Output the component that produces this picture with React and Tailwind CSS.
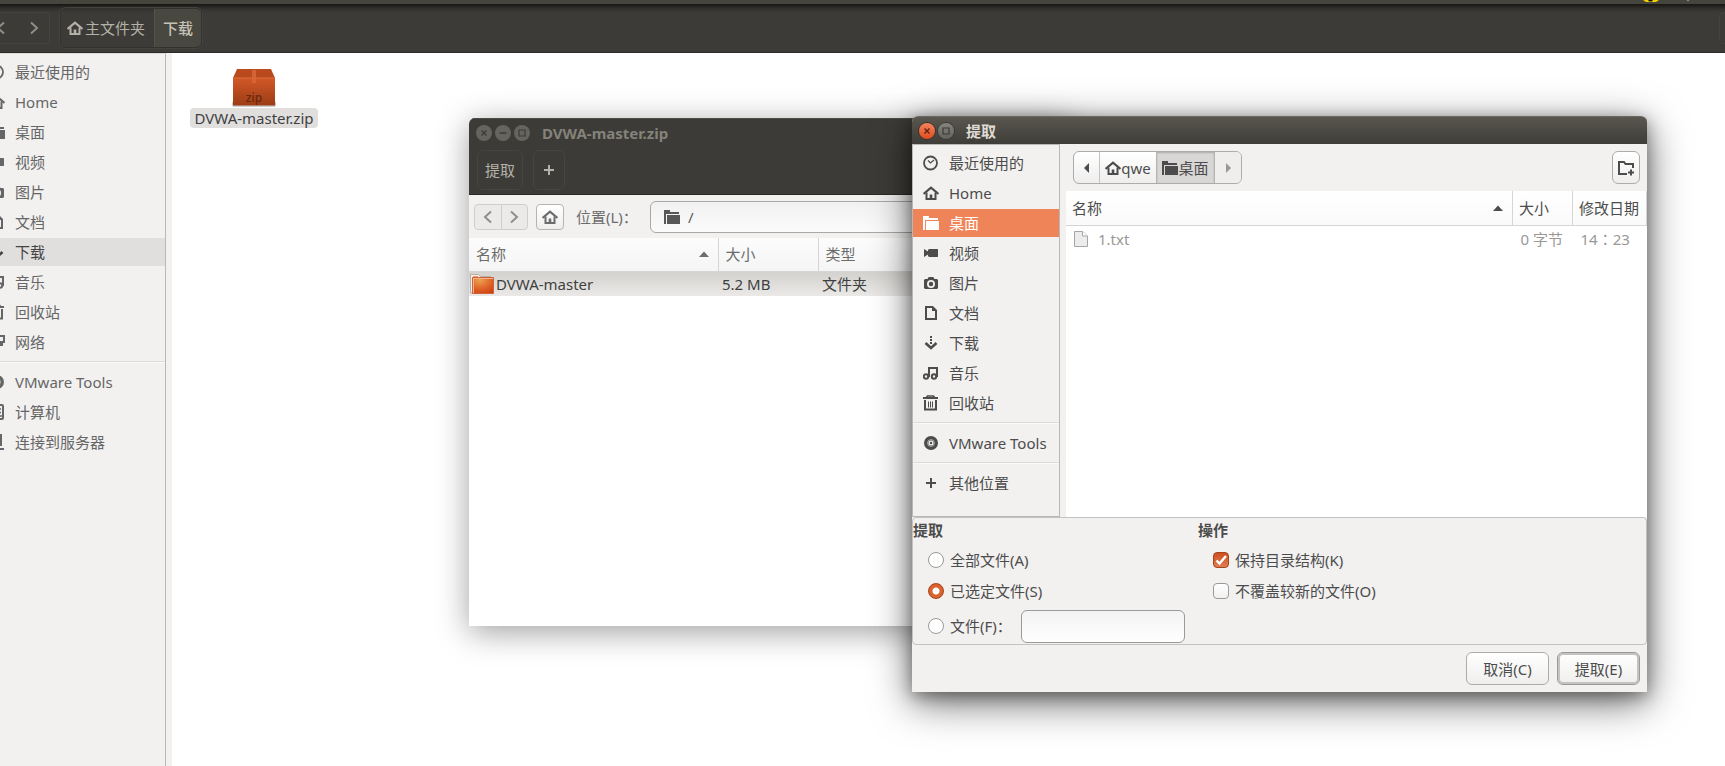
import React from "react";

const solid = { fill: "currentColor" };
const line = { fill: "none", stroke: "currentColor", strokeWidth: 2 };

const glyphs = {
  recent: (
    <g {...line} strokeWidth="1.8">
      <circle cx="7.5" cy="8" r="6.5" />
      <path d="M5 5.5l2.5 2.5 3.5-3" strokeWidth="1.2" />
    </g>
  ),
  home: (
    <g {...line}>
      <path d="M.5 8.9L8 2.6l7.5 6.3" strokeWidth="2.2" />
      <path d="M3.5 7.5V14h9V7.5" />
      <path d="M8 9.5V14" strokeWidth="2.6" />
    </g>
  ),
  folder: (
    <g {...solid}>
      <path d="M0 1h6v2h9v2H2v10H0z" />
      <path d="M3 6h13v9H3z" />
    </g>
  ),
  video: <path {...solid} d="M6 4h8.500l.5.500v7l-.5.500H6l-1-1V9.500L1 12V4l4 2.500V5z" />,
  camera: (
    <g>
      <path
        {...solid}
        fillRule="evenodd"
        d="M2 4h2.500l1.200-2h4.600l1.200 2H14l1 1v8l-1 1H2l-1-1V5zM8 5a4 4 0 1 0 0 8 4 4 0 0 0 0-8z"
      />
      <circle cx="8" cy="9" r="2.200" {...solid} />
    </g>
  ),
  doc: (
    <g>
      <path {...line} d="M3 2h6.500L13 5.500V14H3z" />
      <path {...solid} d="M9 2v4h4z" />
    </g>
  ),
  download: (
    <g>
      <path {...solid} d="M7 1h2v2H7zM7 4h2v2H7zM7 7h2v2H7z" />
      <path {...line} d="M2.500 8L8 13l5.500-5" strokeWidth="2.600" />
    </g>
  ),
  music: (
    <g {...line}>
      <circle cx="3" cy="11.500" r="2.200" />
      <circle cx="11" cy="11.500" r="2.200" />
      <path d="M6 12V3h8v9" />
    </g>
  ),
  trash: (
    <g {...line}>
      <path d="M0 3h15" />
      <path d="M3.500 2.500L4.500 1h6l1 1.500" strokeWidth="1.500" />
      <path d="M2 5v9.500h11V5" />
      <path d="M5.500 6.500v6M7.500 6.500v6M9.500 6.500v6" strokeWidth="1" />
    </g>
  ),
  network: (
    <g {...line}>
      <path d="M7 2h8v6H7z" />
      <path {...solid} stroke="none" d="M9 9h5v3H9z" />
    </g>
  ),
  disc: (
    <g>
      <path {...solid} fillRule="evenodd" d="M8 1a7 7 0 1 0 0 14A7 7 0 0 0 8 1zm0 4.500a2.500 2.500 0 1 1 0 5 2.500 2.500 0 0 1 0-5z" />
      <circle cx="8" cy="8" r="1.200" {...solid} />
      <circle cx="8" cy="8" r="3.400" fill="none" stroke="#f2f1f0" strokeWidth=".6" />
    </g>
  ),
  computer: (
    <g {...line}>
      <rect x="4" y="1" width="10" height="14" rx="1" />
      <path d="M8 5h4M8 8.500h4M11 12h2" strokeWidth="1.500" />
    </g>
  ),
  server: (
    <g {...line}>
      <path d="M5 1h7v10H5M4 15h11" />
    </g>
  ),
  plus: <path {...line} d="M8 3v10M3 8h10" />,
  newFolder: (
    <g {...line}>
      <path d="M9 14H1V2h5l1.500 2H15v4" />
      <path d="M13 9.500v6M10 12.500h6" />
    </g>
  ),
  left: <path {...line} d="M11 2.500L5 8l6 5.500" />,
  right: <path {...line} d="M5 2.500L11 8l-6 5.500" />,
  triLeft: <path {...solid} d="M10 3v10L5 8z" />,
  triRight: <path {...solid} d="M6 3v10l5-5z" />,
  sort: <path {...solid} d="M3 11h10L8 5.500z" />,
};

function Icon({ name, className = "" }) {
  return (
    <svg viewBox="0 0 16 16" aria-hidden="true" className={"size-4 shrink-0 " + className}>
      {glyphs[name]}
    </svg>
  );
}

const places = [
  ["recent", "最近使用的"],
  ["home", "Home"],
  ["folder", "桌面"],
  ["video", "视频"],
  ["camera", "图片"],
  ["doc", "文档"],
  ["download", "下载"],
  ["music", "音乐"],
  ["trash", "回收站"],
];

function Divider() {
  return <div className="my-1 h-[2px] border-t border-[#dcdbd9] bg-[#f9f9f8]" />;
}

function Place({ icon, label, tone = "", indent }) {
  return (
    <div className={"my-px " + tone}>
      <a href="#" className={"flex h-7 items-center gap-[10px] whitespace-nowrap " + indent}>
        <Icon name={icon} />
        {label}
      </a>
    </div>
  );
}

function FileManager() {
  const indent = "-ml-[11px]";
  return (
    <div className="flex min-h-screen flex-col">
      <div className="flex h-1 items-start justify-end bg-[#45443d] pr-[34px]">
        <svg viewBox="0 0 48 3" aria-hidden="true" className="h-[3px] w-12">
          <path d="M0 0h16l-3 2H3z" fill="#f5cf00" />
          <path d="M5 0h5l-1 1.500H6z" fill="#1b1a17" />
          <path d="M44 0h2v1h-2z" fill="#8f8d86" />
        </svg>
      </div>
      <header className="flex h-[49px] items-center overflow-hidden border-b border-[#2c2a27] bg-[linear-gradient(#171613,#33322e_5px,#3c3b37_9px)] text-[#b4b2a8]">
        <div className="-ml-3 flex h-8 w-[62px] items-center justify-between rounded border border-[#44433e] pr-[7px] pl-1 text-[#8f8d86]">
          <button aria-label="后退"><Icon name="left" className="block" /></button>
          <button aria-label="前进"><Icon name="right" className="block" /></button>
        </div>
        <nav className="ml-[10px] flex h-10 overflow-hidden rounded-md border border-[#33322e] shadow-[0_0_0_1px_#44433e]">
          <a href="#" className="flex items-center gap-[2px] pr-[9px] pl-[6px]">
            <Icon name="home" />
            主文件夹
          </a>
          <a href="#" className="flex items-center border-l border-[#54534c] bg-[#484740] px-2 font-medium text-[#c6c3b6]">下载</a>
        </nav>
        <div className="-mr-3 ml-auto h-8 w-[18px] rounded border border-[#44433e]" />
      </header>
      <div className="flex grow">
        <aside className="flex w-[166px] shrink-0 flex-col overflow-hidden border-t border-r border-t-[#dddcda] border-r-[#b9b8b6] bg-[#f2f1f0] pt-[3px] text-[#666]">
          {places.map(([icon, label]) => (
            <Place key={label} icon={icon} label={label} indent={indent} tone={label === "下载" ? "bg-[#e0dfde] text-[#454545]" : ""} />
          ))}
          <Place icon="network" label="网络" indent={indent} />
          <Divider />
          <Place icon="disc" label="VMware Tools" indent={indent} />
          <Place icon="computer" label="计算机" indent={indent} />
          <Place icon="server" label="连接到服务器" indent={indent} />
        </aside>
        <div className="w-[6px] shrink-0 bg-[#f2f1f0]" />
        <main className="grow bg-white pt-4 pl-[18px]">
          <figure className="flex w-32 flex-col items-center gap-px">
            <svg viewBox="0 0 44 38" aria-hidden="true" className="h-[38px] w-11">
              <defs>
                <linearGradient id="box" x1="0" y1="0" x2="0" y2="1">
                  <stop offset="0" stopColor="#d25827" />
                  <stop offset="1" stopColor="#9c3c15" />
                </linearGradient>
              </defs>
              <rect x="0" y="32" width="44" height="6" rx="2" fill="#ccc" />
              <path d="M5 0h34l4 9H1z" fill="#b84a1e" />
              <path d="M1 9h42v27.500H1z" fill="url(#box)" />
              <path d="M1 9h42" stroke="#dd6d3c" />
              <path d="M20 1h4v13h-4z" fill="#d9683c" opacity=".8" />
              <text x="22" y="33" textAnchor="middle" fontSize="12" fontWeight="500" fill="#6b270c">zip</text>
            </svg>
            <figcaption className="flex h-5 w-full items-center justify-center rounded bg-[#e0dfde] text-[#3f3f3f]">DVWA-master.zip</figcaption>
          </figure>
        </main>
      </div>
    </div>
  );
}

function WindowButton({ label, kind, close }) {
  return (
    <button
      aria-label={label}
      className={"size-4 rounded-full " + (close ? "bg-linear-to-b from-[#f4835c] to-[#df4a1a] text-[#5a2210] ring-1 ring-[#3a322d]" : kind)}
    >
      <svg viewBox="0 0 16 16" aria-hidden="true" className="size-4">
        {label === "关闭" && <path d="M5.500 5.500l5 5M10.500 5.500l-5 5" fill="none" stroke="currentColor" strokeWidth="1.400" />}
        {label === "最小化" && <path d="M4.500 8h7" stroke="currentColor" strokeWidth="1.400" />}
        {label === "最大化" && <path d="M5 5h6v6H5z" fill="none" stroke="currentColor" strokeWidth="1.200" />}
      </svg>
    </button>
  );
}

function ArchiveWindow() {
  const muted = "bg-[#65645e] text-[#3c3b37]";
  const head = "border-r border-b border-[#d6d5d3] px-[7px] text-left font-normal";
  return (
    <section className="absolute top-[118px] left-[469px] flex h-[508px] w-[600px] flex-col overflow-hidden rounded-t-md bg-white shadow-[0_6px_32px_rgba(0,0,0,0.38)]">
      <div className="flex h-[77px] shrink-0 flex-col border-b border-[#2c2a27] bg-[#3c3b37]">
        <div className="flex h-[29px] items-center gap-[3px] border-t border-[#4c4b45] pl-[7px]">
          <WindowButton label="关闭" kind={muted} />
          <WindowButton label="最小化" kind={muted} />
          <WindowButton label="最大化" kind={muted} />
          <h1 className="ml-[9px] font-bold text-[#84827a]">DVWA-master.zip</h1>
        </div>
        <div className="flex gap-[10px] pt-[3px] pl-2 text-[#b4b2a8]">
          <button className="h-10 w-[46px] rounded-md border border-[#464540]">提取</button>
          <button aria-label="添加" className="flex h-10 w-8 items-center justify-center rounded-md border border-[#464540]"><Icon name="plus" /></button>
        </div>
      </div>
      <form className="flex h-[43px] shrink-0 items-center bg-[#f2f1f0] pl-[5px] text-[#6c6c6c]">
        <div className="flex h-[26px] w-[54px] divide-x divide-[#cfcecc] rounded border border-[#cfcecc] bg-[#ebeae9] text-[#8e8e8e]">
          <button type="button" aria-label="后退" className="flex grow items-center justify-center"><Icon name="left" /></button>
          <button type="button" aria-label="前进" className="flex grow items-center justify-center"><Icon name="right" /></button>
        </div>
        <button type="button" aria-label="主目录" className="ml-2 flex h-[26px] w-7 items-center justify-center rounded border border-[#b5b4b2] bg-linear-to-b from-white to-[#efeeed]">
          <Icon name="home" />
        </button>
        <label htmlFor="location" className="ml-3 w-[74px] whitespace-nowrap">位置(L)：</label>
        <div className="flex h-8 grow items-center gap-2 rounded-l-md border border-[#a9a8a6] bg-linear-to-b from-[#f1f1f1] to-[#fbfbfb] pl-[13px] text-[#585858]">
          <Icon name="folder" />
          <input id="location" defaultValue="/" className="w-full bg-transparent outline-none" />
        </div>
      </form>
      <table className="w-full table-fixed text-[#6c6c6c]">
        <colgroup>
          <col className="w-[249px]" />
          <col className="w-[100px]" />
          <col />
        </colgroup>
        <thead>
          <tr className="h-[33px] bg-linear-to-b from-[#fcfcfc] to-[#f5f5f5]">
            <th className={head}>
              <div className="flex items-center justify-between">名称<Icon name="sort" className="-mr-px" /></div>
            </th>
            <th className={head}>大小</th>
            <th className={head}>类型</th>
          </tr>
        </thead>
        <tbody>
          <tr className="h-[25px] bg-linear-to-b from-[#d3d1ce] to-[#eae9e7] text-[#3f3f3f]">
            <td>
              <div className="flex items-center gap-[2px]">
                <svg viewBox="0 0 24 20" aria-hidden="true" className="ml-px h-5 w-6 shrink-0">
                  <defs>
                    <radialGradient id="folder" cx=".35" cy=".15" r="1">
                      <stop offset="0" stopColor="#eca24e" />
                      <stop offset=".5" stopColor="#e0692c" />
                      <stop offset="1" stopColor="#cf3a10" />
                    </radialGradient>
                  </defs>
                  <path d="M.5.500h8l2 2h10V19H.5z" fill="#f6efea" stroke="#b9aca4" />
                  <path d="M3 2.500h5" stroke="#e89a70" />
                  <path d="M2.500 3.500h21v16h-21z" fill="url(#folder)" stroke="#d0633a" />
                  <path d="M3.500 19V4.500H23" fill="none" stroke="#f3b48c" />
                </svg>
                DVWA-master
              </div>
            </td>
            <td className="pl-1">5.2 MB</td>
            <td className="pl-1">文件夹</td>
          </tr>
        </tbody>
      </table>
    </section>
  );
}

function Choice({ type, label, name, checked, className = "" }) {
  const look =
    type === "radio"
      ? "rounded-full border-[#9b9a98] bg-white checked:border-[#a5431c] checked:bg-[radial-gradient(circle,#fff_3px,#d9622f_4px)]"
      : "rounded border-[#9b9a98] bg-linear-to-b from-white to-[#f0f0f0] checked:border-[#a5431c] checked:from-[#cc4f1d] checked:to-[#e27d52]";
  return (
    <label className={"flex items-center gap-[6px] whitespace-nowrap " + className}>
      <span className="relative flex">
        <input type={type} name={name} defaultChecked={checked} className={"peer size-4 appearance-none border " + look} />
        {type === "checkbox" && (
          <svg viewBox="0 0 16 16" aria-hidden="true" className="pointer-events-none absolute inset-0 hidden size-4 peer-checked:block">
            <path d="M3.500 8.500l3 3L13 4" fill="none" stroke="#fff" strokeWidth="2.400" />
          </svg>
        )}
      </span>
      {label}
    </label>
  );
}

function ExtractDialog() {
  const head = "border-b border-[#d6d5d3] text-left font-normal px-[6px]";
  const indent = "pl-[10px]";
  return (
    <section role="dialog" aria-labelledby="dialog-title" className="absolute top-[116px] left-[912px] w-[735px] rounded-t-md bg-[#f2f1f0] text-[#4c4c4c] shadow-[0_10px_40px_rgba(0,0,0,0.6),0_4px_16px_rgba(0,0,0,0.35)]">
      <div className="flex h-7 items-center gap-[3px] rounded-t-md border-t border-[#6c6a60] bg-linear-to-b from-[#59574e] to-[#3e3d39] pl-[7px]">
        <WindowButton label="关闭" close />
        <WindowButton label="最大化" kind="bg-linear-to-b from-[#85847d] to-[#63625c] text-[#3c3b37] ring-1 ring-[#3a3935]" />
        <h2 id="dialog-title" className="ml-[9px] font-bold text-[#dfdbd2]">提取</h2>
      </div>
      <div className="flex">
        <aside className="flex h-[373px] w-[148px] shrink-0 flex-col border border-[#b9b8b6] pt-[3px]">
          {places.map(([icon, label]) => (
            <Place key={label} icon={icon} label={label} indent={indent} tone={label === "桌面" ? "bg-[#f08459] text-white" : ""} />
          ))}
          <Divider />
          <Place icon="disc" label="VMware Tools" indent={indent} />
          <Divider />
          <Place icon="plus" label="其他位置" indent={indent} />
        </aside>
        <div className="ml-[6px] flex grow flex-col">
          <div className="flex h-[47px] items-center justify-between px-[7px]">
            <nav className="flex h-[33px] overflow-hidden rounded-md border border-[#adacaa] bg-linear-to-b from-white to-[#efeeed]">
              <button aria-label="向左滚动" className="flex w-[25px] items-center justify-center"><Icon name="triLeft" /></button>
              <a href="#" className="flex w-[57px] items-center justify-center border-l border-[#c4c3c1]"><Icon name="home" />qwe</a>
              <a href="#" className="flex w-[59px] items-center justify-center border-x border-[#b5b4b2] bg-[#d8d7d6] shadow-[inset_0_1px_2px_#aaa]"><Icon name="folder" />桌面</a>
              <button aria-label="向右滚动" className="flex w-[26px] items-center justify-center bg-[#efeeed] text-[#979797]"><Icon name="triRight" /></button>
            </nav>
            <button aria-label="新建文件夹" className="flex h-[33px] w-7 items-center justify-center rounded-md border border-[#adacaa] bg-linear-to-b from-white to-[#efeeed]"><Icon name="newFolder" /></button>
          </div>
          <div className="grow bg-white">
            <table className="w-full table-fixed">
              <colgroup>
                <col />
                <col className="w-[60px]" />
                <col className="w-[74px]" />
              </colgroup>
              <thead>
                <tr className="h-[34px] bg-linear-to-b from-white to-[#fafafa]">
                  <th className={head}>
                    <div className="flex items-center justify-between">名称<Icon name="sort" /></div>
                  </th>
                  <th className={head + " border-l"}>大小</th>
                  <th className={head + " border-x whitespace-nowrap"}>修改日期</th>
                </tr>
              </thead>
              <tbody className="text-[#9a9896]">
                <tr className="h-7">
                  <td className="pl-[7px]">
                    <div className="flex items-center gap-[9px]">
                      <svg viewBox="0 0 16 16" aria-hidden="true" className="size-4">
                        <path d="M1.500.500h8l5 4.500v10.500h-13z" fill="#ececec" stroke="#a5a5a5" />
                        <path d="M9.500.500V5h5" fill="#fff" stroke="#a5a5a5" />
                      </svg>
                      1.txt
                    </div>
                  </td>
                  <td className="pl-2 whitespace-nowrap">0 字节</td>
                  <td className="pl-2 font-['Noto_Sans','Noto_Sans_CJK_TC',sans-serif] whitespace-nowrap">14：23</td>
                </tr>
              </tbody>
            </table>
          </div>
        </div>
      </div>
      <form>
        <div className="flex h-32 rounded border border-[#c3c2c0]">
          <fieldset className="w-[285px]">
            <legend className="h-[26px] pt-[2px] font-bold">提取</legend>
            <div className="flex flex-col pl-[15px]">
              <Choice type="radio" name="scope" label="全部文件(A)" className="h-[31px]" />
              <Choice type="radio" name="scope" label="已选定文件(S)" checked className="h-[31px]" />
              <div className="flex h-10 items-center">
                <Choice type="radio" name="scope" label="文件(F)：" className="w-[93px]" />
                <input aria-label="文件" className="h-[33px] w-[164px] rounded-md border border-[#9b9a98] bg-linear-to-b from-[#f3f3f3] to-white px-2" />
              </div>
            </div>
          </fieldset>
          <fieldset>
            <legend className="h-[26px] pt-[2px] font-bold">操作</legend>
            <div className="flex flex-col pl-[15px]">
              <Choice type="checkbox" label="保持目录结构(K)" checked className="h-[31px]" />
              <Choice type="checkbox" label="不覆盖较新的文件(O)" className="h-[31px]" />
            </div>
          </fieldset>
        </div>
        <div className="flex h-[47px] items-center justify-end gap-2 pr-[7px]">
          <button type="button" className="h-[33px] w-[83px] rounded-md border border-[#adacaa] bg-linear-to-b from-white to-[#efeeed]">取消(C)</button>
          <button type="button" className="h-[33px] w-[83px] rounded-md border border-[#9b9a98] bg-linear-to-b from-white to-[#efeeed] shadow-[inset_0_0_0_2px_#c4c3c1]">提取(E)</button>
        </div>
      </form>
    </section>
  );
}

export default function App() {
  return (
    <div className="relative overflow-hidden font-['Noto_Sans','Noto_Sans_CJK_SC',sans-serif] text-[15px] leading-5">
      <FileManager />
      <ArchiveWindow />
      <ExtractDialog />
    </div>
  );
}
